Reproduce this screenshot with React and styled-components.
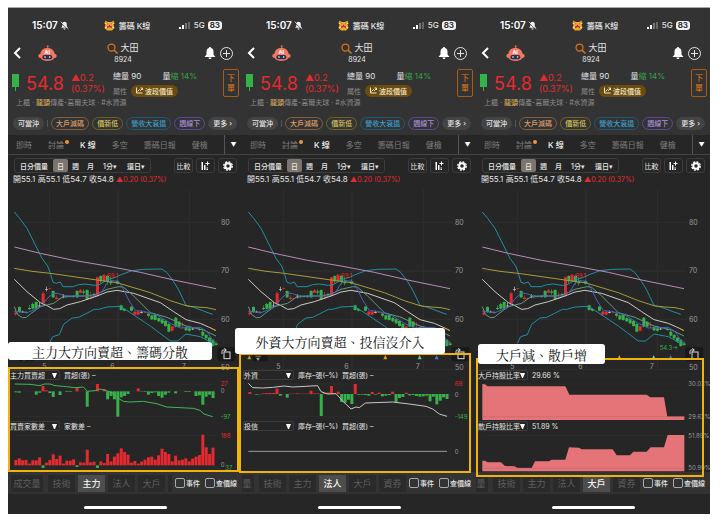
import React from 'react';
import styled, { createGlobalStyle } from 'styled-components';

const GlobalStyle = createGlobalStyle`
  * {
    box-sizing: border-box;
  }
  body {
    margin: 0;
    background: #fff;
    font-family: Inter, 'Noto Sans CJK TC', sans-serif;
  }
  button,
  select,
  input {
    margin: 0;
    padding: 0;
    border: none;
    background: none;
    color: inherit;
    font: inherit;
  }
  svg {
    display: block;
    flex: none;
  }
`;

const Page = styled.main`
  display: grid;
  grid-template-columns: repeat(3, minmax(0, 1fr));
  padding: 7px 10px 10px 8px;
`;

const Phone = styled.section`
  position: relative;
  border-top: 1px solid #aaa;
  background: #262626;
  color: #e4e4e4;
  font-size: 8px;
  white-space: nowrap;
`;

const Top = styled.header`
  background: #333;
`;

const ThreeColumns = styled.div`
  display: grid;
  grid-template-columns: 1fr auto 1fr;
  align-items: center;
  height: 30px;
`;

const StatusBar = styled(ThreeColumns)`
  padding: 4px 20px 0 24px;
  font-weight: 500;
`;

const Cluster = styled.div`
  display: flex;
  align-items: center;
  gap: ${props => props.$gap || 2}px;
  justify-content: ${props => (props.$end ? 'flex-end' : 'flex-start')};
`;

const Clock = styled.span`
  color: #fff;
  font-size: 10px;
  font-weight: 600;
`;

const Battery = styled.span`
  padding: 0 2px;
  border-radius: 3px;
  background: #f2f2f2;
  color: #333;
  font-size: 8px;
  font-weight: 700;
  line-height: 9px;
`;

const TitleBar = styled(ThreeColumns)`
  padding: 0 9px 0 5px;
`;

const IconButton = styled.button`
  display: flex;
  color: #fff;
`;

const StockTitle = styled.div`
  display: flex;
  flex-direction: column;
  align-items: center;
  h1 {
    display: flex;
    align-items: center;
    gap: 2px;
    margin: 0;
    font-size: 9px;
    font-weight: 400;
    line-height: 14px;
  }
  span {
    font-size: 7px;
    line-height: 10px;
  }
`;

const Quote = styled.div`
  display: flex;
  align-items: center;
  height: 30px;
  padding: 0 3px 0 4px;
`;

const Price = styled.strong`
  width: 45px;
  margin-left: 7px;
  color: #e32a2f;
  font-size: 18px;
  font-weight: 400;
`;

const Change = styled.div`
  width: 42px;
  color: #e32a2f;
  font-size: 9px;
  line-height: 11px;
`;

const Figures = styled.div`
  flex: 1;
  padding-right: 26px;
`;

const FigureRow = styled.div`
  display: flex;
  align-items: center;
  justify-content: ${props => (props.$spread ? 'space-between' : 'flex-start')};
  gap: 4px;
  height: 15px;
  color: ${props => (props.$dim ? '#8a8a8a' : '#e4e4e4')};
  font-size: ${props => (props.$dim ? 7 : 8)}px;
`;

const ValueTag = styled.button`
  display: flex;
  align-items: center;
  gap: 2px;
  height: 12px;
  padding: 0 5px;
  border-radius: 6px;
  background: #6b4c10;
  color: #f3e6c8;
  font-size: 7px;
  font-weight: 500;
`;

const OrderButton = styled.button`
  width: 16px;
  height: 28px;
  border: 1px solid #a85c14;
  border-radius: 2px;
  color: #e07b1c;
  font-size: 8px;
  line-height: 10px;
  white-space: normal;
`;

const Category = styled.p`
  margin: 0;
  padding-left: 8px;
  color: #8c8c8c;
  font-size: 7px;
  line-height: 10px;
  em {
    color: #d9ac5c;
    font-style: normal;
    font-weight: 500;
  }
`;

const Chips = styled.div`
  display: flex;
  align-items: center;
  justify-content: space-between;
  padding: 9px 5px 5px;
`;

const Chip = styled.button`
  height: 13px;
  padding: 0 4px;
  border: 1px solid ${props => props.$line || '#444'};
  border-radius: 7px;
  background: ${props => (props.$line ? 'none' : '#444')};
  color: ${props => props.$color || '#e4e4e4'};
  font-size: 7px;
  font-weight: 500;
  line-height: 11px;
`;

const Divider = styled.span`
  width: 1px;
  height: ${props => props.$height}px;
  background: #555;
`;

const Colored = styled.span`
  color: ${props => props.color};
`;

const Tabs = styled.nav`
  display: flex;
  align-items: center;
  gap: 16px;
  height: 20px;
  padding-left: 8px;
  border-bottom: 1px solid #444;
`;

const Tab = styled.button`
  position: relative;
  color: ${props => (props.$active ? '#f2f2f2' : '#7d7d7d')};
  font-weight: ${props => (props.$active ? 500 : 400)};
`;

const Dot = styled.i`
  position: absolute;
  top: 1px;
  right: -5px;
  width: 4px;
  height: 4px;
  border-radius: 50%;
  background: #f0953c;
`;

const MoreTabs = styled.button`
  width: 18px;
  height: 100%;
  margin-left: auto;
  border-left: 1px solid #555;
  color: #fff;
  font-size: 6px;
`;

const Toolbar = styled.div`
  display: flex;
  justify-content: space-between;
  padding: 3px 5px 0 6px;
  font-size: 7px;
`;

const Periods = styled.div`
  display: flex;
  border: 1px solid #3c3c3c;
  border-radius: 3px;
`;

const Period = styled.button`
  height: 13px;
  padding: 0 ${props => (props.$wide ? 5 : 4)}px;
  border-radius: 2px;
  background: ${props => (props.$active ? '#7d756d' : 'none')};
  font-weight: 500;
`;

const ToolButton = styled.button`
  display: flex;
  align-items: center;
  justify-content: center;
  width: 19px;
  height: 15px;
  border: 1px solid #3c3c3c;
  border-radius: 3px;
`;

const Ohlc = styled.p`
  margin: 0;
  padding-left: 5px;
  font-size: 8px;
  line-height: 13px;
  span {
    font-size: 7px;
  }
`;

const Chart = styled.svg`
  width: 100%;
  overflow: visible;
  text {
    font-family: Inter, sans-serif;
    font-size: ${props => (props.$small ? 18 : 21)}px;
    fill: #999;
  }
`;

const IndicatorHead = styled.div`
  display: flex;
  align-items: center;
  gap: 4px;
  height: 10px;
  padding-left: 1px;
  font-size: 7px;
  white-space: pre;
`;

const Picker = styled.label`
  display: flex;
  align-items: center;
  width: 51px;
  height: 10px;
  border: 1px solid #3c3c3c;
  border-radius: 2px;
  color: #fff;
  select {
    flex: 1;
    min-width: 0;
    appearance: none;
    color: #e4e4e4;
  }
  svg {
    margin-right: 2px;
  }
`;

const BottomBar = styled.div`
  display: flex;
  align-items: center;
  height: 22px;
  background: #333;
`;

const BottomTabs = styled.nav`
  display: flex;
  flex: 1;
  min-width: 0;
  justify-content: ${props => (props.$scrolled ? 'flex-end' : 'flex-start')};
  gap: 3px;
  padding-left: 3px;
  overflow: hidden;
`;

const BottomTab = styled.button`
  flex: none;
  width: 27px;
  height: 17px;
  background: ${props => (props.$active ? '#4d4d4d' : '#2a2a2a')};
  color: ${props => (props.$active ? '#f2f2f2' : '#5e5e5e')};
  font-size: 9px;
  font-weight: ${props => (props.$active ? 500 : 400)};
  &:first-child {
    width: 32px;
    margin-right: 2px;
  }
`;

const Options = styled.div`
  display: flex;
  gap: 5px;
  padding: 0 5px 0 3px;
  font-size: 7px;
  font-weight: 500;
`;

const Option = styled.label`
  display: flex;
  align-items: center;
  gap: 1px;
  input {
    width: 10px;
    height: 10px;
    appearance: none;
    border: 1px solid #aaa;
    border-radius: 2px;
  }
`;

const HomeArea = styled.div`
  display: flex;
  align-items: center;
  justify-content: center;
  height: 20px;
  padding-top: 7px;
  &::before {
    width: 83px;
    height: 3px;
    border-radius: 2px;
    background: #fff;
    content: '';
  }
`;

const Frame = styled.div`
  position: absolute;
  top: ${props => props.$top}px;
  right: ${props => props.$right}px;
  bottom: ${props => props.$bottom}px;
  left: ${props => props.$left}px;
  z-index: 1;
  border: 2px solid #f2b20c;
  pointer-events: none;
`;

const Note = styled.div`
  position: absolute;
  top: ${props => props.$top}px;
  left: ${props => props.$left}px;
  z-index: 2;
  display: flex;
  align-items: center;
  justify-content: center;
  width: ${props => props.$width}px;
  height: ${props => props.$height}px;
  border-radius: 3px;
  background: #fff;
  color: #111;
  font-family: 'Liberation Serif', 'Noto Serif CJK TC', 'Noto Sans CJK TC', serif;
  font-size: 13px;
`;

const RED = '#e32a2f';
const GREEN = '#36b14a';
const WHITE = '#ccc';

const movingLines = [
  {
    color: '#1f8fa3',
    points:
      '22,66 38,85 60,115 85,165 105,205 122,228 130,250 138,277 148,280 160,276 168,290 198,290 215,284 235,282 262,286 275,285 300,270 325,262 345,253 375,242 410,238 465,237 480,248 500,275 515,300 537,346 560,352 600,367 617,373'
  },
  {
    color: '#1f8fa3',
    points:
      '127,460 137,440 157,434 170,403 195,384 215,382 235,372 262,358 275,358 300,351 340,349 370,368 430,408 490,453 512,453 537,432 580,440 620,462'
  },
  { color: '#b98ab8', points: '22,171 100,190 200,211 300,228 400,247 500,270 627,296' },
  {
    color: '#a39c38',
    points: '22,235 75,244 130,250 270,270 330,278 430,308 490,332 540,348 570,351 600,353 627,359'
  },
  {
    color: '#cfc8c0',
    points:
      '22,268 60,305 100,338 120,347 140,358 158,356 180,345 220,335 270,318 300,306 330,301 380,310 460,338 500,365 537,389 580,400 605,411 627,422'
  },
  {
    color: '#5d9c80',
    points:
      '22,350 32,374 46,383 58,382 70,372 100,350 140,340 165,322 200,318 240,318 270,312 300,298 335,290 350,292 380,318 430,368 480,382 537,408 590,420 627,438'
  },
  {
    color: '#4a63b8',
    points:
      '22,364 60,368 100,352 120,326 140,309 155,311 175,318 220,318 262,318 285,305 300,280 312,272 335,274 345,290 365,330 385,362 410,364 450,375 490,400 520,414 580,412 600,425 620,455 627,460'
  }
];

// [x, body top, body bottom, color, wick top, wick bottom]
const candles = [
  [26, 368, 373, RED, 362, 377],
  [37, 351, 366, GREEN, 349, 369],
  [47, 365, 367, WHITE, 362, 369],
  [57, 366, 368, WHITE, 364, 370],
  [67, 354, 357, GREEN, 346, 360],
  [77, 342, 356, GREEN, 338, 358],
  [87, 336, 356, GREEN, 334, 358],
  [97, 347, 349, WHITE, 337, 351],
  [108, 310, 342, RED, 304, 346],
  [118, 298, 300, WHITE, 290, 304],
  [128, 295, 297, RED, 294, 298],
  [138, 303, 322, GREEN, 301, 324],
  [148, 323, 327, RED, 316, 329],
  [158, 325, 327, RED, 324, 328],
  [169, 317, 319, WHITE, 312, 325],
  [179, 317, 320, GREEN, 315, 322],
  [189, 318, 321, GREEN, 316, 323],
  [199, 318, 321, GREEN, 316, 324],
  [210, 303, 322, GREEN, 300, 324],
  [220, 301, 308, RED, 297, 310],
  [230, 304, 308, GREEN, 298, 314],
  [240, 300, 328, GREEN, 298, 330],
  [251, 322, 326, RED, 306, 328],
  [261, 317, 321, GREEN, 309, 323],
  [271, 262, 318, RED, 260, 320],
  [281, 258, 274, GREEN, 256, 280],
  [291, 258, 274, RED, 252, 276],
  [301, 258, 276, GREEN, 254, 284],
  [311, 272, 280, GREEN, 262, 286],
  [331, 273, 281, GREEN, 268, 283],
  [342, 346, 360, GREEN, 344, 362],
  [352, 357, 362, GREEN, 354, 364],
  [373, 350, 362, GREEN, 348, 364],
  [383, 365, 374, RED, 363, 376],
  [393, 365, 374, RED, 361, 376],
  [403, 366, 368, WHITE, 362, 370],
  [414, 367, 369, RED, 366, 370],
  [424, 371, 377, GREEN, 368, 382],
  [434, 376, 388, GREEN, 374, 390],
  [444, 374, 390, GREEN, 372, 392],
  [455, 384, 394, GREEN, 382, 396],
  [465, 388, 400, GREEN, 386, 402],
  [475, 393, 408, GREEN, 391, 410],
  [485, 402, 425, GREEN, 400, 427],
  [495, 409, 422, RED, 407, 424],
  [506, 383, 410, GREEN, 381, 412],
  [516, 395, 410, GREEN, 393, 412],
  [526, 404, 406, RED, 396, 414],
  [537, 411, 421, GREEN, 409, 423],
  [547, 415, 422, GREEN, 409, 425],
  [557, 416, 418, WHITE, 414, 420],
  [577, 417, 420, GREEN, 415, 422],
  [587, 425, 437, GREEN, 418, 440],
  [597, 435, 445, GREEN, 432, 448],
  [607, 443, 455, GREEN, 441, 458],
  [617, 449, 468, GREEN, 447, 470],
  [627, 460, 465, GREEN, 454, 467]
];

const mainForce = [
  -3, -4, 0, 0, 0, 0, -10, -4, 16, 3, -5, -17, 0, -11, 0, -2, -2, 0, 12, 0, 0, -46, 0, 0, 22, 0, 7,
  -24, -14, -24, -76, -18, -14, -8, 0, 0, 9, -1, -2, -10, -5, -3, -14, -19, -10, -4, 0, -6, 0, 0,
  -2, -2, 0, -14, -12, -40, -16, -10, -20
];

const brokerGap = [
  16, 21, 15, 16, 5, 15, 15, 24, -8, 8, 16, 33, 19, 29, 5, 14, 14, 18, -5, 9, 8, 47, 9, 11, -8, 12,
  7, 34, 12, 26, 36, 51, 40, 32, 8, 13, 5, 11, 17, 24, 26, 17, 30, 50, 40, 34, 12, 29, 15, 17, 21,
  12, 20, 26, 31, 92, 54, 34, 53
];

const foreign = [
  6, 0, -2, -1, 2, 3, 3, 3, 16, -5, 0, -11, 1, 1, 2, 1, 1, 1, 10, 2, 2, -66, 3, 5, 24, 2, 7, -24,
  -26, -17, -30, 30, -2, -2, -3, -5, 6, -2, 4, -7, -5, -3, 7, -24, -12, -9, 4, -4, -3, -6, -8, -7,
  -5, -22, -8, -31, -20, -10, -15
];

const phones = [
  {
    active: '主力',
    note: { text: '主力大方向賣超、籌碼分散', $left: 0, $top: 334, $width: 204, $height: 18 },
    frame: { $left: 0, $right: 3, $top: 359, $bottom: 42 },
    indicators: [
      {
        name: '主力買賣超',
        value: '買超(張) –',
        viewBox: '24 60 702 123',
        x: 47,
        base: 94,
        bars: mainForce,
        line:
          '44,72 90,73 120,77 133,72 150,72 165,77 200,80 225,83 250,81 262,94 285,92 300,87 320,92 340,100 352,113 370,124 390,126 430,124 470,131 500,141 540,143 580,145 600,151 612,162 638,170',
        lineColor: '#43b555',
        labels: [['27', 662, 79, RED], ['0', 662, 100], ['-97', 662, 177, GREEN]]
      },
      {
        name: '買賣家數差',
        value: '家數差 –',
        viewBox: '24 213 702 123',
        x: 47,
        base: 316,
        bars: brokerGap,
        labels: [['188', 662, 233, RED], ['0', 662, 322], ['37', 676, 331, GREEN]]
      }
    ]
  },
  {
    active: '法人',
    scrolled: true,
    note: { text: '外資大方向賣超、投信沒介入', $left: -7, $top: 320, $width: 210, $height: 26 },
    frame: { $left: -3, $right: 5, $top: 345, $bottom: 41 },
    indicators: [
      {
        name: '外資',
        value: '庫存–張(–%)  買超(張) –',
        viewBox: '18 105 702 123',
        x: 41,
        base: 147,
        bars: foreign,
        line:
          '37,115 50,128 80,129 110,127 145,123 170,126 245,122 255,140 275,147 300,146 320,168 345,192 360,186 370,188 388,174 470,171 520,177 570,184 590,192 610,207 633,214',
        lineColor: '#c8c8c8',
        labels: [['69', 656, 124, RED], ['0', 656, 155], ['-149', 656, 222, GREEN]]
      },
      {
        name: '投信',
        value: '庫存–張(–%)  買超(張) –',
        viewBox: '18 258 702 123',
        line: '37,319 633,319',
        lineColor: '#999',
        labels: [['0', 656, 326]]
      }
    ]
  },
  {
    active: '大戶',
    scrolled: true,
    note: { text: '大戶減、散戶增', $left: 2, $top: 336, $width: 127, $height: 20 },
    frame: { $left: 0, $right: 6, $top: 350, $bottom: 37 },
    indicators: [
      {
        name: '大戶持股比率',
        value: '29.66 %',
        viewBox: '3 105 702 123',
        area:
          '22,117 30,118 38,124 271,124 283,149 515,149 525,157 567,157 577,215 628,215 628,225 22,225',
        guide: 215,
        labels: [['30.03%', 640, 124], ['29.63%', 640, 222]]
      },
      {
        name: '散戶持股比率',
        value: '51.89 %',
        viewBox: '3 258 702 123',
        area:
          '22,347 30,347 38,352 78,352 90,363 118,364 128,369 170,369 180,349 222,349 230,344 271,344 282,307 312,308 320,313 413,313 425,331 465,331 475,320 515,320 527,307 567,307 578,270 628,270 628,379 22,379',
        guide: 370,
        labels: [['51.89%', 640, 278], ['50.99%', 640, 376]]
      }
    ]
  }
];

const BellOff = () => (
  <svg width="9" height="9" viewBox="0 0 24 24" fill="#f2f2f2">
    <path d="M12 2c-4 0-6 3-6 7v5l-3 4h18l-3-4V9c0-4-2-7-6-7zM9 20h6c0 4-6 4-6 0z" />
    <path d="M2 5l20 18" stroke="#333" strokeWidth="2" />
    <path d="M2 2l20 19" stroke="#f2f2f2" strokeWidth="2" />
  </svg>
);

const AppLogo = () => (
  <svg width="11" height="11" viewBox="0 0 22 22">
    <path d="M2 1l6 3h6l6-3-1 7 2 8-5 5H6l-5-5 2-8z" fill="#e8a828" />
    <path d="M1 6l5 2M21 6l-5 2M2 16l4-2M20 16l-4-2" stroke="#fff0b0" strokeWidth="2" />
    <path d="M5 6l6 4 6-4-2 6 2 5-6-3-6 3 2-5z" fill="#c92c20" />
    <circle cx="8" cy="10" r="1.5" fill="#fff" />
    <circle cx="14" cy="10" r="1.5" fill="#fff" />
  </svg>
);

const Signal = () => (
  <svg width="12" height="7" viewBox="0 0 12 7">
    <rect x="0" y="5" width="2" height="2" fill="#fff" />
    <rect x="3" y="3" width="2" height="4" fill="#fff" />
    <rect x="6" y="1" width="2" height="6" fill="#777" />
    <rect x="9" y="0" width="2" height="7" fill="#666" />
  </svg>
);

const Robot = () => (
  <svg width="19" height="17" viewBox="0 0 57 51">
    <path d="M29 12V3" stroke="#e8644f" strokeWidth="3" />
    <circle cx="29" cy="4" r="3" fill="#e8644f" />
    <path
      d="M28 9C14 9 8 17 7 27c-4 0-6 2-6 6s3 6 7 6c4 7 11 9 20 9s17-2 21-9c4 0 7-2 7-6s-3-6-6-6C49 17 42 9 28 9z"
      fill="#f4775f"
    />
    <rect x="13" y="30" width="30" height="13" rx="6" fill="#243456" />
    <circle cx="21" cy="36" r="2.5" fill="#fff" />
    <circle cx="35" cy="36" r="2.5" fill="#fff" />
    <text x="28" y="27" fill="#fff" fontSize="16" fontWeight="700" textAnchor="middle">
      AI
    </text>
  </svg>
);

const StatusAndTitle = () => (
  <>
    <StatusBar>
      <Cluster>
        <Clock>15:07</Clock>
        <BellOff />
      </Cluster>
      <Cluster $gap={4}>
        <AppLogo />
        籌碼 K線
      </Cluster>
      <Cluster $gap={3} $end>
        <Signal />
        5G
        <Battery>83</Battery>
      </Cluster>
    </StatusBar>
    <TitleBar>
      <Cluster $gap={17}>
        <IconButton aria-label="返回">
          <svg width="8" height="12" viewBox="0 0 8 12" fill="none" stroke="#fff" strokeWidth="2">
            <path d="M7 1L2 6l5 5" />
          </svg>
        </IconButton>
        <Robot />
      </Cluster>
      <StockTitle>
        <h1>
          <svg width="11" height="11" viewBox="0 0 22 22" fill="none" stroke="#dc7218">
            <circle cx="9" cy="9" r="7" strokeWidth="2.5" />
            <path d="M14 14l7 7" strokeWidth="3" />
          </svg>
          大田
        </h1>
        <span>8924</span>
      </StockTitle>
      <Cluster $gap={4} $end>
        <IconButton aria-label="通知">
          <svg width="12" height="12" viewBox="0 0 24 24" fill="currentColor">
            <path d="M12 0c-1.500 0-2 1-2 2-4 1-5 4-5 8v5l-4 5h22l-4-5v-5c0-4-1-7-5-8 0-1-.5-2-2-2zM9 21h6c0 4-6 4-6 0z" />
          </svg>
        </IconButton>
        <IconButton aria-label="加入">
          <svg width="13" height="13" viewBox="0 0 26 26" fill="none" stroke="#e4e4e4" strokeWidth="2">
            <circle cx="13" cy="13" r="12" />
            <path d="M13 6v14M6 13h14" />
          </svg>
        </IconButton>
      </Cluster>
    </TitleBar>
  </>
);

const QuoteHeader = () => (
  <Top>
    <StatusAndTitle />
    <Quote>
      <svg width="7" height="18" viewBox="0 0 7 18" fill={GREEN}>
        <rect width="7" height="13" />
        <rect x="3" y="13" width="1" height="4" />
      </svg>
      <Price>54.8</Price>
      <Change>
        ▲0.2
        <br />
        (0.37%)
      </Change>
      <Figures>
        <FigureRow $spread>
          <span>總量 90</span>
          <span>
            量<Colored color="#36a14a">縮 14%</Colored>
          </span>
        </FigureRow>
        <FigureRow $dim>
          屬性
          <ValueTag>
            <svg width="7" height="7" viewBox="0 0 14 14" fill="none" stroke="#f3e6c8" strokeWidth="2">
              <path d="M1 1v11h12M3 9l4-4 2 2 4-4M9 2h4v4" />
            </svg>
            波段價值
          </ValueTag>
        </FigureRow>
      </Figures>
      <OrderButton>下 單</OrderButton>
    </Quote>
    <Category>
      上櫃 ‧ <em>龍頭</em>傳產-高爾夫球 ‧ #水資源
    </Category>
    <Chips>
      <Chip>可當沖</Chip>
      <Divider $height={7} />
      <Chip $line="#80603f" $color="#d99a68">
        大戶減碼
      </Chip>
      <Chip $line="#6e6326" $color="#d6c158">
        價新低
      </Chip>
      <Chip $line="#1e5875" $color="#3c9ccc">
        營收大衰退
      </Chip>
      <Chip $line="#5e4a92" $color="#a78ed8">
        週線下
      </Chip>
      <Chip>更多 ›</Chip>
    </Chips>
  </Top>
);

const Controls = () => (
  <>
    <Tabs>
      <Tab>即時</Tab>
      <Tab>
        討論
        <Dot />
      </Tab>
      <Tab $active>K 線</Tab>
      <Tab>多空</Tab>
      <Tab>籌碼日報</Tab>
      <Tab>健檢</Tab>
      <MoreTabs>▼</MoreTabs>
    </Tabs>
    <Toolbar>
      <Periods>
        <Period $wide>日分價量</Period>
        <Period $active>日</Period>
        <Period>週</Period>
        <Period>月</Period>
        <Period $wide>1分▾</Period>
        <Period $wide>還日▾</Period>
      </Periods>
      <Cluster $gap={3}>
        <ToolButton>比較</ToolButton>
        <ToolButton aria-label="指標">
          <svg width="9" height="10" viewBox="0 0 18 20" fill="#fff">
            <path d="M1 2h3v16H1zM6 8h3v10H6zM11 13h3v2h-3zM11 16h3v2h-3zM12 1h2v3h3v2h-3v3h-2V6H9V4h3z" />
          </svg>
        </ToolButton>
        <ToolButton aria-label="設定">
          <svg width="10" height="10" viewBox="0 0 20 20" fill="none" stroke="#fff">
            <circle cx="10" cy="10" r="5.500" strokeWidth="4" />
            <circle cx="10" cy="10" r="8.500" strokeWidth="2.500" strokeDasharray="4 2.670" />
          </svg>
        </ToolButton>
      </Cluster>
    </Toolbar>
    <Ohlc>
      開55.1 高55.1 低54.7 收54.8 <Colored color={RED}>▲0.20 (0.37%)</Colored>
    </Ohlc>
  </>
);

const PriceChart = () => (
  <Chart viewBox="3 -12 702 552">
    <path
      d="M127 0V540M333 0V540M547 0V540M22 97H635M22 243H635M22 388H635M22 538H635"
      stroke="#303030"
      strokeWidth="3"
    />
    {candles.map(([x, top, bottom, color, high, low]) => (
      <g key={x} fill={color}>
        <rect x={x - 1} y={high} width="2" height={low - high} />
        <rect x={x - 4} y={top} width="9" height={bottom - top} />
      </g>
    ))}
    {movingLines.map(({ color, points }) => (
      <polyline key={points} points={points} fill="none" stroke={color} strokeWidth="3" />
    ))}
    <path d="M612 414L627 422" stroke="#dd8a1c" strokeWidth="3" />
    <text x="283" y="263" style={{ fill: RED, fontSize: 18 }}>
      ←69.1
    </text>
    <text x="554" y="479" style={{ fill: GREEN, fontSize: 18 }}>
      54.3→
    </text>
    <path d="M25 496l6 12H19z" fill="#a39c38" />
    <path d="M433 495l6 13h-12z" fill="#f0951c" />
    <path d="M536 495l6 13h-12z" fill="#69c6a4" />
    <path d="M587 495l6 13h-12z" fill="#4c73e0" />
    <rect x="35" y="484" width="45" height="30" rx="5" fill="#191919" />
    <path d="M43 499h17M47 505h8l-4 6z" stroke="#aaa" strokeWidth="2" fill="#aaa" />
    <rect x="631" y="472" width="54" height="42" rx="6" fill="#191919" />
    <rect x="651" y="486" width="18" height="20" fill="none" stroke="#ddd" strokeWidth="3" />
    <path d="M645 492v-8q0-4 4-4h8M652 475l6 5-6 5" fill="none" stroke="#ddd" strokeWidth="3" />
    <text x="642" y="104">80</text>
    <text x="642" y="250">70</text>
    <text x="642" y="395">60</text>
    <text x="642" y="539">50</text>
    <text x="106" y="536">5</text>
    <text x="310" y="536">6</text>
    <text x="524" y="536">7</text>
  </Chart>
);

const Indicator = ({ name, value, viewBox, x, base, bars = [], line, lineColor, area, guide, labels }) => (
  <>
    <IndicatorHead>
      <Picker>
        <select aria-label={name} defaultValue={name}>
          <option>{name}</option>
        </select>
        <svg width="5" height="5" viewBox="0 0 5 5" fill="currentColor">
          <path d="M0 0h5L3 5H2z" />
        </svg>
      </Picker>
      <span>{value}</span>
    </IndicatorHead>
    <Chart viewBox={viewBox} $small>
      {labels.map(([text, labelX, y]) => (
        <path key={text} d={`M${labelX - 618} ${y - 7}h605`} stroke="#303030" strokeWidth="2" />
      ))}
      {bars.map((size, i) => (
        <rect
          key={i}
          x={x + i * 10.2 - 4}
          y={size > 0 ? base - size : base}
          width="9"
          height={Math.abs(size)}
          fill={size > 0 ? RED : GREEN}
        />
      ))}
      {line && <polyline points={line} fill="none" stroke={lineColor} strokeWidth="3" />}
      {area && <polygon points={area} fill="#e57478" />}
      {guide && <path d={`M22 ${guide}h606`} stroke="#c9666a" strokeWidth="2" />}
      {labels.map(([text, labelX, y, color]) => (
        <text key={text} x={labelX} y={y} style={{ fill: color }}>
          {text}
        </text>
      ))}
    </Chart>
  </>
);

const bottomTabs = ['成交量', '技術', '主力', '法人', '大戶', '資券'];

const App = () => (
  <Page>
    <GlobalStyle />
    {phones.map(({ active, scrolled, note, frame, indicators }) => {
      const { text, ...notePlace } = note;
      return (
        <Phone key={active}>
          <QuoteHeader />
          <Controls />
          <PriceChart />
          {indicators.map(indicator => (
            <Indicator key={indicator.name} {...indicator} />
          ))}
          <BottomBar>
            <BottomTabs $scrolled={scrolled}>
              {bottomTabs.map(name => (
                <BottomTab key={name} $active={name === active}>
                  {name}
                </BottomTab>
              ))}
            </BottomTabs>
            <Options>
              <Option>
                <input type="checkbox" />
                事件
              </Option>
              <Option>
                <input type="checkbox" />
                查價線
              </Option>
            </Options>
          </BottomBar>
          <HomeArea />
          <Frame {...frame} />
          <Note {...notePlace}>{text}</Note>
        </Phone>
      );
    })}
  </Page>
);

export default App;
